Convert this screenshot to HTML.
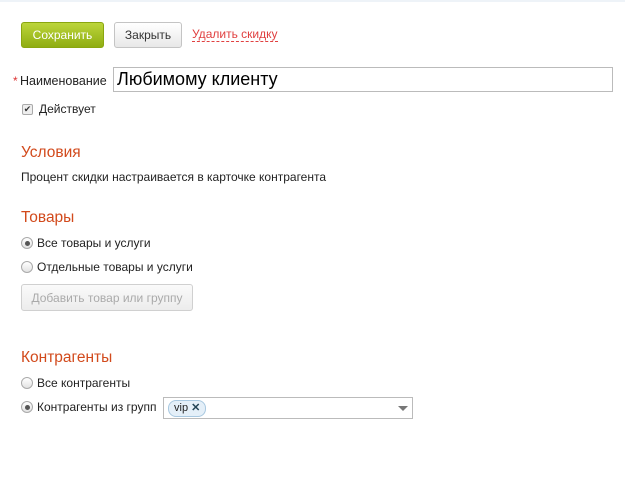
<!DOCTYPE html>
<html><head><meta charset="utf-8"><style>
body{margin:0;width:625px;height:478px;background:#fff;font-family:"Liberation Sans",Arial,sans-serif;font-size:12px;color:#222;position:relative;overflow:hidden}
.topline{position:absolute;top:0;left:0;right:0;height:2px;background:#eef3f8}
.a{position:absolute}
.btn{position:absolute;height:26px;border-radius:3px;box-sizing:border-box;display:flex;align-items:center;justify-content:center;font-size:12px}
.save{left:21px;top:22px;width:83px;background:linear-gradient(#bcd53a,#8fad12);color:#fff;border:1px solid #8aa60f}
.close{left:114px;top:22px;width:68px;background:linear-gradient(#fff,#e8e8e8);border:1px solid #c4c4c4;color:#333}
.del{left:192px;top:28px;color:#e04040;border-bottom:1px dashed #e04040;line-height:13px}
h2{position:absolute;margin:0;font-weight:normal;font-size:15.5px;color:#d24a1c}
.radio{position:absolute;width:12px;height:12px;border-radius:50%;border:1px solid #aaa;background:linear-gradient(#fff,#e2e2e2);box-sizing:border-box}
.radio.on::after{content:"";position:absolute;left:2.5px;top:2.5px;width:5px;height:5px;border-radius:50%;background:#555}
</style></head><body>
<div class="topline"></div>
<div class="btn save">Сохранить</div>
<div class="btn close">Закрыть</div>
<div class="a del">Удалить скидку</div>
<div class="a" style="left:13px;top:74px;color:#d33">*</div>
<div class="a" style="left:20px;top:74px;font-size:12.5px">Наименование</div>
<div class="a" style="left:113px;top:67px;width:500px;height:25px;border:1px solid #bbb;box-sizing:border-box;font-size:18px;line-height:23px;padding-left:3px;color:#000">Любимому клиенту</div>
<div class="a" style="left:22px;top:104px;width:11px;height:11px;border:1px solid #aaa;border-radius:2px;background:#eee;box-sizing:border-box;font-size:9px;line-height:9px;text-align:center;color:#333">✔</div>
<div class="a" style="left:39px;top:102px">Действует</div>
<h2 style="left:21px;top:144px">Условия</h2>
<div class="a" style="left:21px;top:170px">Процент скидки настраивается в карточке контрагента</div>
<h2 style="left:21px;top:209px">Товары</h2>
<div class="radio on" style="left:21px;top:237px"></div>
<div class="a" style="left:37px;top:236px">Все товары и услуги</div>
<div class="radio" style="left:21px;top:261px"></div>
<div class="a" style="left:37px;top:260px">Отдельные товары и услуги</div>
<div class="btn" style="left:21px;top:284px;width:172px;height:27px;background:linear-gradient(#fafafa,#ececec);border:1px solid #d0d0d0;color:#aaa">Добавить товар или группу</div>
<h2 style="left:21px;top:349px">Контрагенты</h2>
<div class="radio" style="left:21px;top:377px"></div>
<div class="a" style="left:37px;top:376px">Все контрагенты</div>
<div class="radio on" style="left:21px;top:401px"></div>
<div class="a" style="left:37px;top:400px">Контрагенты из групп</div>
<div class="a" style="left:163px;top:397px;width:250px;height:22px;border:1px solid #bbb;box-sizing:border-box"></div>
<div class="a" style="left:168px;top:400px;height:15px;padding:0 5px;border:1px solid #a8c8e0;border-radius:8px;background:#e4eff8;font-size:11px;line-height:15px;color:#222">vip <b style="color:#245;font-size:11px">✕</b></div>
<div class="a" style="left:398px;top:406px;width:0;height:0;border-left:5px solid transparent;border-right:5px solid transparent;border-top:5px solid #777"></div>
</body></html>
